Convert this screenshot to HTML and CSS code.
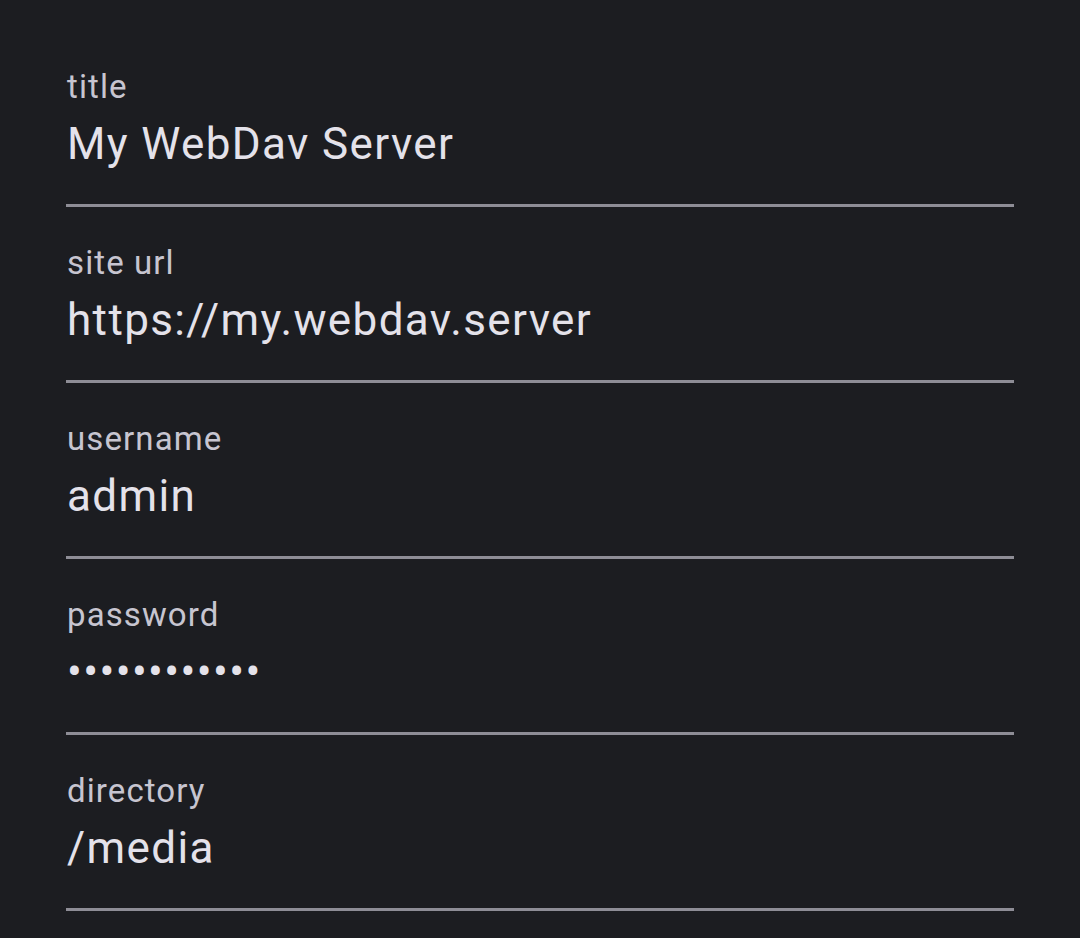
FILE: index.html
```html
<!DOCTYPE html>
<html>
<head>
<meta charset="utf-8">
<link rel="stylesheet" href="styles.css">
</head>
<body>
<main class="form">
  <div class="field">
    <div class="label">title</div>
    <div class="value">My WebDav Server</div>
  </div>
  <div class="field">
    <div class="label">site url</div>
    <div class="value">https://my.webdav.server</div>
  </div>
  <div class="field">
    <div class="label">username</div>
    <div class="value">admin</div>
  </div>
  <div class="field">
    <div class="label">password</div>
    <div class="value">••••••••••••</div>
  </div>
  <div class="field">
    <div class="label">directory</div>
    <div class="value">/media</div>
  </div>
</main>
</body>
</html>
```
FILE: styles.css
```css
html, body {
  margin: 0;
  padding: 0;
  background: #1c1d21;
}
body {
  font-family: Roboto, "Noto Sans", sans-serif;
  width: 1080px;
  height: 938px;
  overflow: hidden;
}
.form {
  display: flex;
  flex-direction: column;
  padding: 31px 66px 0 66px;
}
.field {
  height: 137px;
  padding-top: 36px;
  border-bottom: 3px solid #8e8d96;
  display: flex;
  flex-direction: column;
}
.label {
  color: #c7c5d0;
  font-size: 33px;
  line-height: 40px;
  letter-spacing: 1.1px;
  padding-left: 1px;
}
.value {
  color: #e4e2ea;
  font-size: 44px;
  line-height: 60px;
  letter-spacing: 1.375px;
  margin-top: 7px;
  padding-left: 1px;
}
```
